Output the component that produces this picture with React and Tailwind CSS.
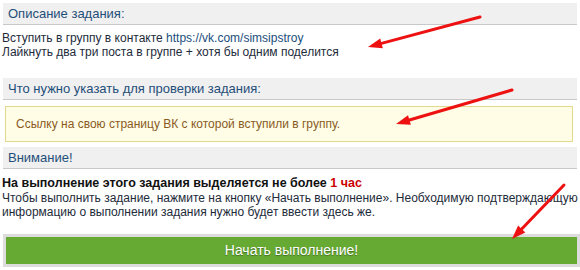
import React from 'react';

const Header = ({ children, className = '' }) => (
  <div
    className={`mx-[3px] h-[22px] flex items-center px-[5px] bg-[#f0f0f0] border-b border-[#c8c8c8] text-[13px] text-[#1f4e79] ${className}`}
  >
    {children}
  </div>
);

const Arrow = ({ x1, y1, x2, y2 }) => {
  const a = Math.atan2(y2 - y1, x2 - x1);
  const len = 14;
  const w = 5;
  const bx = x2 - len * Math.cos(a);
  const by = y2 - len * Math.sin(a);
  const px = -Math.sin(a) * w;
  const py = Math.cos(a) * w;
  return (
    <g>
      <line x1={x1} y1={y1} x2={bx} y2={by} stroke="#ee1111" strokeWidth="3" strokeLinecap="round" />
      <polygon points={`${x2},${y2} ${bx + px},${by + py} ${bx - px},${by - py}`} fill="#ee1111" />
    </g>
  );
};

const App = () => {
  return (
    <div
      className="relative w-[580px] h-[270px] overflow-hidden bg-white pt-[3px] text-[#1d2b3a]"
      style={{ fontFamily: '"Liberation Sans", Arial, sans-serif' }}
    >
      {/* Task description */}
      <Header>Описание задания:</Header>
      <div className="px-[2px] pt-[6px] text-[12px] leading-[14px]">
        <p>
          Вступить в группу в контакте{' '}
          <span className="text-[#1a4e7c]">https://vk.com/simsipstroy</span>
        </p>
        <p>Лайкнуть два три поста в группе + хотя бы одним поделится</p>
      </div>

      {/* What to specify */}
      <Header className="mt-[19px]">Что нужно указать для проверки задания:</Header>
      <div className="ml-[5px] mr-[7px] mt-[6px] h-[36px] flex items-center px-[10px] bg-[#fffde6] border border-[#e2d98c] text-[12px] text-[#8a5a1e]">
        Ссылку на свою страницу ВК с которой вступили в группу.
      </div>

      {/* Attention */}
      <Header className="mt-[5px]">Внимание!</Header>
      <div className="px-[2px] pt-[7px] text-[12px] leading-[14px]">
        <p className="font-bold text-[12.5px] text-[#111]">
          На выполнение этого задания выделяется не более <span className="text-[#cc0000]">1 час</span>
        </p>
        <p className="mt-[1px]">
          Чтобы выполнить задание, нажмите на кнопку «Начать выполнение». Необходимую подтверждающую
          информацию о выполнении задания нужно будет ввести здесь же.
        </p>
      </div>

      <div className="ml-[3px] mt-[15px] p-[3px] bg-[#dcdcdc]">
        <button
          className="w-full h-[27px] bg-[#66aa33] text-white text-[14px] border-none cursor-pointer"
          style={{ textShadow: '0 1px 1px rgba(0,0,0,0.35)' }}
        >
          Начать выполнение!
        </button>
      </div>

      {/* Red annotation arrows */}
      <svg className="absolute inset-0 pointer-events-none" width="580" height="270">
        <Arrow x1={480} y1={17} x2={368} y2={47} />
        <Arrow x1={512} y1={90} x2={396} y2={124} />
        <Arrow x1={564} y1={185} x2={512} y2={239} />
      </svg>
    </div>
  );
};

export default App;
